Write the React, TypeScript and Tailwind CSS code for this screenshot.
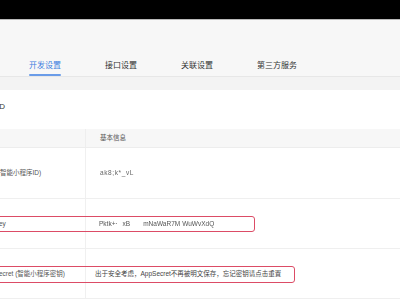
const tabs = [
  { name: '开发设置', active: true },
  { name: '接口设置', active: false },
  { name: '关联设置', active: false },
  { name: '第三方服务', active: false },
]

export default function App() {
  return (
    <div className="w-[400px] h-[300px] overflow-hidden bg-white font-['Liberation_Sans','Noto_Sans_CJK_SC',sans-serif]">
      {/* window top */}
      <div className="h-[19px] bg-black" />
      <div className="h-px bg-[#b9b9b9]" />

      {/* tabs */}
      <header className="h-[57px] bg-[#f7f7f7] border-b border-[#e7e7e7] flex items-end pl-[29px] gap-[44px]">
        {tabs.map((tab) => (
          <div key={tab.name} className="flex flex-col items-stretch">
            <span
              className={`text-[8px] leading-[10px] whitespace-nowrap ${
                tab.active ? 'text-[#3f7fe0]' : 'text-[#333]'
              }`}
            >
              {tab.name}
            </span>
            <div className={`h-[2px] mt-[3px] rounded-full ${tab.active ? 'bg-[#6a9ce8]' : 'bg-transparent'}`} />
          </div>
        ))}
      </header>
      <div className="h-[13px] bg-[#f3f3f3]" />

      {/* content, scrolled past the left edge */}
      <main className="-ml-[17px] w-[430px]">
        <h2 className="pt-[12px] h-[39px] -ml-[10px] text-[8px] leading-[10px] text-[#333]">开发者ID</h2>

        <div className="text-[6.5px] leading-[8px] text-[#555]">
          {/* header row */}
          <div className="flex h-[19px] bg-[#f7f7f7] border-b border-[#ededed]">
            <div className="w-[103px] border-r border-[#eeeeee]" />
            <div className="flex-1 flex items-center pl-[14px]">基本信息</div>
          </div>

          {/* AppID */}
          <div className="flex h-[51px] border-b border-[#efefef]">
            <div className="w-[103px] border-r border-[#f0f0f0] flex items-center whitespace-nowrap">
              <span className="-ml-[5px]">AppID (智能小程序ID)</span>
            </div>
            <div className="flex-1 flex items-center pl-[14px]">
              <span className="blur-[0.6px] tracking-[0.6px] text-[#666]">ak8;k*_vL</span>
            </div>
          </div>

          {/* AppKey */}
          <div className="relative flex h-[50px] border-b border-[#efefef]">
            <div className="w-[103px] border-r border-[#f0f0f0] flex items-center whitespace-nowrap">AppKey</div>
            <div className="flex-1 flex items-center pl-[13px] whitespace-nowrap text-[#555]">
              <span className="blur-[0.6px]">Pktk+·</span>
              <span className="ml-[5px] blur-[0.6px]">xB</span>
              <span className="ml-[13px] blur-[0.6px]">mNaWaR7M</span>
              <span className="ml-[2px] blur-[0.3px]">WuWvXdQ</span>
            </div>
            <div className="absolute left-[6px] w-[266px] top-[17px] h-[16px] border-[1.5px] border-[#dc4c66] rounded-[3px]" />
          </div>

          {/* AppSecret */}
          <div className="relative flex h-[50px] border-b border-[#efefef]">
            <div className="w-[103px] border-r border-[#f0f0f0] flex items-center whitespace-nowrap">AppSecret (智能小程序密钥)</div>
            <div className="flex-1 flex items-center pl-[9px] whitespace-nowrap text-[#444]">
              出于安全考虑，AppSecret不再被明文保存，忘记密钥请点击重置
            </div>
            <div className="absolute left-[6px] w-[306px] top-[17px] h-[17px] border-[1.5px] border-[#dc4c66] rounded-[3px]" />
          </div>
        </div>
      </main>
    </div>
  )
}
